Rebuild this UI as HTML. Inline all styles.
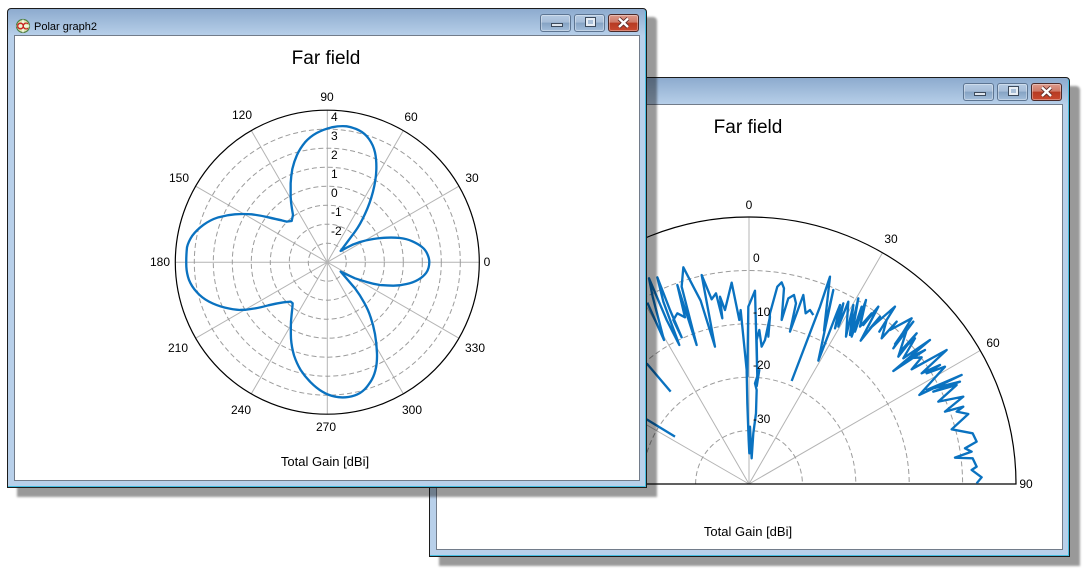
<!DOCTYPE html>
<html><head><meta charset="utf-8">
<style>
html,body{margin:0;padding:0;background:#fff;width:1083px;height:573px;overflow:hidden;font-family:"Liberation Sans",sans-serif}
.win{position:absolute;box-sizing:border-box;border:1px solid #1c1c1c;border-radius:4px 4px 0 0;background:linear-gradient(#8dabce 0,#b8d0ea 27px,#b8d0ea 100%);box-shadow:inset -1px -1px 0 #45bde0,10px 9px 2px rgba(0,0,0,.4)}
.cl{position:absolute;background:#fff;box-sizing:border-box;border:1px solid #727c8a}
.btn{position:absolute;box-sizing:border-box;height:18px;border:1px solid #5d7592;border-radius:3px;background:linear-gradient(#b5cbe3 0,#a6bdd8 45%,#85a3c4 50%,#a4bedb 100%);box-shadow:inset 0 0 0 1px rgba(255,255,255,.35)}
.btn.x{border-color:#4a2a2a;background:linear-gradient(#dd9a8c 0,#cf7a68 45%,#b63a22 50%,#c9492f 100%)}
.g{position:absolute;box-sizing:border-box;background:#dfe6ef;border:1px solid #3c4a5c}
.mx{position:absolute;box-sizing:border-box;left:11px;top:3px;width:9px;height:8px;background:#a9bfd8;border:2px solid #e8eef5;outline:1px solid #3c4a5c}
svg.o{position:absolute;left:0;top:0}
text{font-family:"Liberation Sans",sans-serif;font-size:12px;fill:#000}
.m{text-anchor:middle}
.t{font-size:19px}
.a{font-size:13px}
.grid{stroke:#b4b4b4;stroke-width:1;fill:none}
.ring{stroke:#9c9c9c;stroke-width:1;stroke-dasharray:5 3;fill:none}
</style></head><body>

<div class="win" style="left:429px;top:77px;width:641px;height:480px">
  <div class="cl" style="left:6px;top:26px;width:627px;height:446px"></div>
  <div class="btn" style="left:533px;top:5px;width:31px"><div class="g" style="left:10px;top:8px;width:12px;height:4px"></div></div>
  <div class="btn" style="left:567px;top:5px;width:31px"><div class="mx"></div></div>
  <div class="btn x" style="left:601px;top:5px;width:31px">
    <svg width="29" height="16" style="position:absolute;left:0;top:0"><path d="M10 3.5L19 12M19 3.5L10 12" stroke="#5a2a28" stroke-width="4"/><path d="M10 3.5L19 12M19 3.5L10 12" stroke="#fff" stroke-width="2.4"/></svg>
  </div>
</div>

<svg class="o" width="1083" height="573">
  <path class="grid" d="M749 484V217M749 484L882.5 252.8M749 484L980.2 350.5M749 484L615.5 252.8M749 484L517.8 350.5"/>
  <path class="ring" d="M695.6 484A53.4 53.4 0 0 1 802.4 484M642.2 484A106.8 106.8 0 0 1 855.8 484M588.8 484A160.2 160.2 0 0 1 909.2 484M535.4 484A213.6 213.6 0 0 1 962.6 484"/>
  <path d="M482 484A267 267 0 0 1 1016 484Z" fill="none" stroke="#000" stroke-width="1.2"/>
  <g fill="none" stroke="#0a72c0" stroke-width="7" stroke-linejoin="round">
    <polyline transform="translate(640,230) scale(.3333)" points="22,218 72,330 38,200 27,145 80,270 118,345 70,215 52,142 90,240 125,322 100,270 112,250 135,262 112,165 170,345 125,170 130,112 160,170 182,212 225,350 185,135 215,208 228,190 247,265 240,200 255,240 275,158 298,270 302,240 322,440 325,230 345,182 352,440 350,330 358,300 365,350 375,330 390,260 385,320 390,250 412,170 425,157 432,175 425,270 445,205 462,195 468,220 450,305 490,195 497,250 510,240 520,255"/>
    <polyline transform="translate(640,370) scale(.3333)" points="320,0 322,100 326,210 328,250 330,170 335,265 340,190 348,130 350,60 345,40 358,0 350,50"/>
    <polyline transform="translate(640,230) scale(.3333)" points="20,400 92,485"/>
    <polyline transform="translate(640,370) scale(.3333)" points="20,148 105,200"/>
    <polyline transform="translate(780,270) scale(.3333)" points="35,333 120,110 150,20 132,182 160,60 115,272 170,130 180,105 165,175 190,100 175,170 205,95 198,200 220,105 210,195 235,85 215,200 245,110 225,185 258,90 240,170 275,130 250,165 295,110 242,212 300,140 270,175 345,110 298,185 320,150 305,205 350,155 330,180 395,145 340,235 400,155 345,222 385,165 355,260 410,190 365,240 405,205 370,265 450,210 340,303 435,240 385,265 425,262 395,298 500,240 425,310 480,285 440,310 495,290 418,375 545,315 440,360 540,335 460,365 530,345 475,395 550,380 495,425 550,410 530,425 565,432 515,478 578,490 590,515 555,535 575,545 525,563 578,565 590,590 575,600 605,622 590,640"/>
  </g>
  <text class="t m" x="748" y="133">Far field</text>
  <text class="m" x="749" y="209">0</text>
  <text class="m" x="891" y="243">30</text>
  <text class="m" x="993" y="347">60</text>
  <text class="m" x="1026" y="488">90</text>
  <text x="753" y="262">0</text>
  <text x="753" y="316">-10</text>
  <text x="753" y="369">-20</text>
  <text x="753" y="423">-30</text>
  <text class="a m" x="748" y="536">Total Gain [dBi]</text>
</svg>

<div class="win" style="left:7px;top:8px;width:640px;height:480px">
  <div class="cl" style="left:6px;top:26px;width:626px;height:446px"></div>
  <svg width="16" height="16" style="position:absolute;left:7px;top:9px"><circle cx="8" cy="8" r="6.5" fill="#dfe8b4" stroke="#4f7f45" stroke-width="1.2"/><path d="M1.5 8H14.5M8 1.5V14.5" stroke="#fff" stroke-width="1"/><circle cx="5.5" cy="8" r="2.8" fill="none" stroke="#c81e1e" stroke-width="1.3"/><path d="M13 5.8A2.9 2.9 0 1 0 13 10.2" fill="none" stroke="#c81e1e" stroke-width="1.3"/></svg>
  <div style="position:absolute;left:26px;top:12px;font-size:11px;line-height:13px;color:#000">Polar graph2</div>
  <div class="btn" style="left:532px;top:5px;width:31px"><div class="g" style="left:10px;top:8px;width:12px;height:4px"></div></div>
  <div class="btn" style="left:566px;top:5px;width:31px"><div class="mx"></div></div>
  <div class="btn x" style="left:600px;top:5px;width:31px">
    <svg width="29" height="16" style="position:absolute;left:0;top:0"><path d="M10 3.5L19 12M19 3.5L10 12" stroke="#5a2a28" stroke-width="4"/><path d="M10 3.5L19 12M19 3.5L10 12" stroke="#fff" stroke-width="2.4"/></svg>
  </div>
</div>

<svg class="o" width="1083" height="573">
  <path class="grid" d="M458.9 186.2L195.7 338.2M403.3 130.6L251.3 393.8M251.3 130.6L403.3 393.8M195.7 186.2L458.9 338.2"/>
  <path class="grid" stroke-width="1.3" d="M175.3 262.2H479.3M327.3 110.2V414.2"/>
  <g class="ring"><circle cx="327.3" cy="262.2" r="19"/><circle cx="327.3" cy="262.2" r="38"/><circle cx="327.3" cy="262.2" r="57"/><circle cx="327.3" cy="262.2" r="76"/><circle cx="327.3" cy="262.2" r="95"/><circle cx="327.3" cy="262.2" r="114"/><circle cx="327.3" cy="262.2" r="133"/></g>
  <circle cx="327.3" cy="262.2" r="152" fill="none" stroke="#000" stroke-width="1.2"/>
  <path transform="translate(160,90) scale(.3333)" fill="none" stroke="#0a72c0" stroke-width="7" stroke-linejoin="round" d="M542 483L561 472.5Q580 462 600 456Q620 450 640 447Q660 444 680 443Q700 442 720 444Q740 446 757 454Q775 462 786 471Q797 480 802 492Q808 505 808 516Q808 535 799 548Q790 560 775 569Q760 578 740 582Q720 587 700 587Q680 587 660 585Q640 582 620 576Q600 570 585 565L542 545L585 595Q600 615 612 637Q625 660 632 682Q640 705 645 732Q650 760 651 790Q652 820 646 842Q640 865 627 882Q615 900 600 909Q585 918 565 921Q545 924 525 920Q505 916 487 905Q470 895 452 877Q435 860 422 840Q410 820 402 796Q395 772 393 746Q392 720 393 695Q395 670 397 655L398 640L392 635L371 637Q350 640 325 646Q300 653 280 656Q260 660 240 660Q220 659 195 653Q170 647 147 635Q125 623 110 606Q95 590 87 570Q80 550 79 530Q78 500 81 472Q85 455 97 437Q110 420 130 405Q150 390 175 382Q200 375 225 373Q250 371 275 373Q300 376 325 382Q350 388 365 391L380 395L395 393L399 375L396 357Q393 340 392 320Q392 300 392 280Q393 260 397 237Q402 215 411 195Q420 175 435 157Q450 140 470 129Q490 118 515 112Q540 107 560 109Q580 112 597 121Q615 130 627 147Q640 165 645 187Q650 210 649 240Q648 270 639 305Q630 340 615 372Q600 405 585 425Z"/>
  <text class="t m" x="326" y="64">Far field</text>
  <text class="m" x="327" y="101">90</text>
  <text class="m" x="411" y="121">60</text>
  <text class="m" x="472" y="182">30</text>
  <text class="m" x="487" y="266">0</text>
  <text class="m" x="475" y="352">330</text>
  <text class="m" x="412" y="414">300</text>
  <text class="m" x="326" y="431">270</text>
  <text class="m" x="241" y="414">240</text>
  <text class="m" x="178" y="352">210</text>
  <text class="m" x="160" y="266">180</text>
  <text class="m" x="179" y="182">150</text>
  <text class="m" x="242" y="119">120</text>
  <text x="331" y="121">4</text>
  <text x="331" y="140">3</text>
  <text x="331" y="159">2</text>
  <text x="331" y="178">1</text>
  <text x="331" y="197">0</text>
  <text x="331" y="216">-1</text>
  <text x="331" y="235">-2</text>
  <text class="a m" x="325" y="466">Total Gain [dBi]</text>
</svg>
</body></html>
